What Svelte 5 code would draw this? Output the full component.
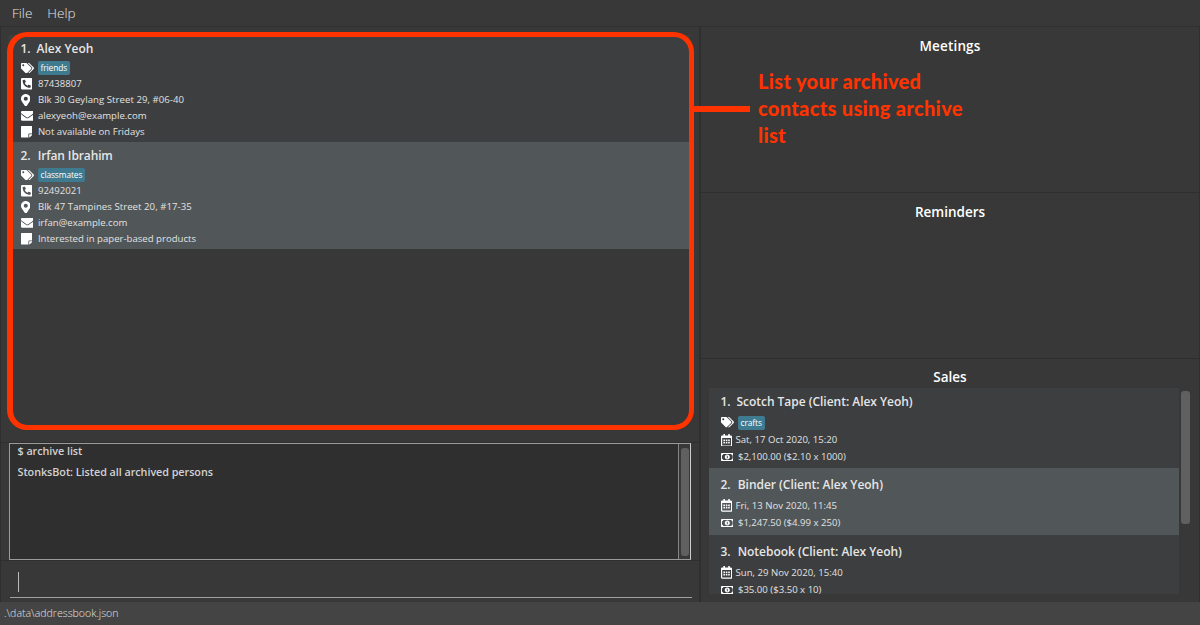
<script>
  const persons = [
    {
      name: 'Alex Yeoh', tag: 'friends', phone: '87438807',
      address: 'Blk 30 Geylang Street 29, #06-40',
      email: 'alexyeoh@example.com', remark: 'Not available on Fridays'
    },
    {
      name: 'Irfan Ibrahim', tag: 'classmates', phone: '92492021',
      address: 'Blk 47 Tampines Street 20, #17-35',
      email: 'irfan@example.com', remark: 'Interested in paper-based products'
    }
  ];
  const sales = [
    { item: 'Scotch Tape (Client: Alex Yeoh)', tag: 'crafts', date: 'Sat, 17 Oct 2020, 15:20', price: '$2,100.00 ($2.10 x 1000)' },
    { item: 'Binder (Client: Alex Yeoh)', date: 'Fri, 13 Nov 2020, 11:45', price: '$1,247.50 ($4.99 x 250)' },
    { item: 'Notebook (Client: Alex Yeoh)', date: 'Sun, 29 Nov 2020, 15:40', price: '$35.00 ($3.50 x 10)' }
  ];
  const icons = {
    tags: { box: '0 0 640 512', w: 13, h: 10.4, d: 'M497.941 225.941L286.059 14.059A48 48 0 0 0 252.118 0H48C21.49 0 0 21.49 0 48v204.118a48 48 0 0 0 14.059 33.941l211.882 211.882c18.744 18.745 49.136 18.746 67.882 0l204.118-204.118c18.745-18.745 18.745-49.137 0-67.882zM112 160c-26.51 0-48-21.49-48-48s21.49-48 48-48 48 21.49 48 48-21.49 48-48 48zm513.941 133.823L421.823 497.941c-18.745 18.745-49.137 18.745-67.882 0l-.36-.36L527.64 323.522c16.999-16.999 26.36-39.6 26.36-63.64s-9.362-46.641-26.36-63.64L331.397 0h48.721a48 48 0 0 1 33.941 14.059l211.882 211.882c18.745 18.745 18.745 49.137 0 67.882z' },
    phone: { box: '0 32 448 448', w: 11.5, h: 11.5, d: 'M400 32H48A48 48 0 0 0 0 80v352a48 48 0 0 0 48 48h352a48 48 0 0 0 48-48V80a48 48 0 0 0-48-48zm-16.39 307.37l-15 65A15 15 0 0 1 354 416C194 416 64 286.29 64 126a15.7 15.7 0 0 1 11.63-14.61l65-15A18.23 18.23 0 0 1 144 96a16.27 16.27 0 0 1 13.79 9.09l30 70A17.9 17.9 0 0 1 189 181a17 17 0 0 1-5.5 11.61l-37.89 31a231.91 231.91 0 0 0 110.78 110.78l31-37.89A17 17 0 0 1 299 291a17.85 17.85 0 0 1 5.91 1.21l70 30A16.25 16.25 0 0 1 384 336a17.41 17.41 0 0 1-.39 3.37z' },
    pin: { box: '0 0 384 512', w: 9.6, h: 12.8, d: 'M172.268 501.67C26.97 291.031 0 269.413 0 192 0 85.961 85.961 0 192 0s192 85.961 192 192c0 77.413-26.97 99.031-172.268 309.67-9.535 13.774-29.93 13.773-39.464 0zM192 272c44.183 0 80-35.817 80-80s-35.817-80-80-80-80 35.817-80 80 35.817 80 80 80z' },
    mail: { box: '0 64 512 384', w: 12.8, h: 9.8, d: 'M502.3 190.8c3.9-3.1 9.7-.2 9.7 4.7V400c0 26.5-21.5 48-48 48H48c-26.5 0-48-21.5-48-48V195.6c0-5 5.7-7.8 9.7-4.7 22.4 17.4 52.1 39.5 154.1 113.6 21.1 15.4 56.7 47.8 92.2 47.6 35.7.3 72-32.8 92.3-47.6 102-74.1 131.6-96.3 154-113.7zM256 320c23.2.4 56.6-29.2 73.4-41.4 132.7-96.3 142.8-104.7 173.4-128.7 5.8-4.5 9.2-11.5 9.2-18.9v-19c0-26.5-21.5-48-48-48H48c-26.5 0-48 21.5-48 48v19c0 7.4 3.4 14.3 9.2 18.9 30.6 23.9 40.7 32.4 173.4 128.7 16.8 12.2 50.2 41.8 73.4 41.4z' },
    note: { box: '0 32 448 448', w: 11.5, h: 11.5, d: 'M312 320h136V56c0-13.3-10.7-24-24-24H24C10.7 32 0 42.7 0 56v400c0 13.3 10.7 24 24 24h264V344c0-13.2 10.8-24 24-24zm129 55l-98 98c-4.5 4.5-10.6 7-17 7h-6V352h128v6.1c0 6.3-2.5 12.4-7 16.9z' },
    calendar: { box: '0 0 448 512', w: 11.2, h: 12.8, d: 'M96 224h64v64H96zM192 224h64v64h-64zM288 224h64v64h-64zM96 320h64v64H96zM192 320h64v64h-64zM288 320h64v64h-64zM448 112v352c0 26.5-21.5 48-48 48H48c-26.5 0-48-21.5-48-48V112c0-26.5 21.5-48 48-48h48V12c0-6.6 5.4-12 12-12h40c6.6 0 12 5.4 12 12v52h128V12c0-6.6 5.4-12 12-12h40c6.6 0 12 5.4 12 12v52h48c26.5 0 48 21.5 48 48zm-48 346V160H48v298c0 3.3 2.7 6 6 6h340c3.3 0 6-2.7 6-6z' },
    money: { box: '0 64 640 384', w: 12.6, h: 8, d: 'M608 64H32C14.3 64 0 78.3 0 96v320c0 17.7 14.3 32 32 32h576c17.7 0 32-14.3 32-32V96c0-17.7-14.3-32-32-32zM112 112H528c0 35 29 64 64 64v160c-35 0-64 29-64 64H112c0-35-29-64-64-64V176c35 0 64-29 64-64zM320 136c-71 0-128 54-128 120s57 120 128 120 128-54 128-120-57-120-128-120zM304 190h36v100h20v30h-80v-30h24v-64h-20v-26z' }
  };
</script>

{#snippet icon(key)}
  {@const i = icons[key]}
  <span class="icon"><svg viewBox={i.box} width={i.w} height={i.h} preserveAspectRatio="none" fill-rule="evenodd"><path d={i.d} /></svg></span>
{/snippet}

<div class="app">
  <nav><span>File</span><span>Help</span></nav>
  <main>
    <section class="left">
      <div class="people">
        {#each persons as p, n}
          <article class="person" class:even={n % 2 === 1}>
            <h3><span>{n + 1}.</span>{p.name}</h3>
            <div class="row">{@render icon('tags')}<b class="tag">{p.tag}</b></div>
            <div class="row">{@render icon('phone')}<span>{p.phone}</span></div>
            <div class="row address">{@render icon('pin')}<span>{p.address}</span></div>
            <div class="row">{@render icon('mail')}<span>{p.email}</span></div>
            <div class="row">{@render icon('note')}<span>{p.remark}</span></div>
          </article>
        {/each}
        <div class="frame"></div>
        <div class="lead"></div>
      </div>
      <div class="result">
        <div class="log"><p>$ archive list</p><p>StonksBot: Listed all archived persons</p></div>
        <div class="track"><i></i></div>
      </div>
      <div class="command"><div class="field"><i></i></div></div>
    </section>
    <section class="right">
      <div class="panel"><h2>Meetings</h2><p class="callout">List your archived<br />contacts using archive<br />list</p></div>
      <div class="panel"><h2>Reminders</h2></div>
      <div class="panel">
        <h2>Sales</h2>
        <div class="sales">
          <div class="list">
            {#each sales as s, n}
              <article class="sale" class:even={n % 2 === 1} class:tagged={s.tag}>
                <h3><span>{n + 1}.</span>{s.item}</h3>
                {#if s.tag}<div class="row">{@render icon('tags')}<b class="tag">{s.tag}</b></div>{/if}
                <div class="row date">{@render icon('calendar')}<span>{s.date}</span></div>
                <div class="row price">{@render icon('money')}<span>{s.price}</span></div>
              </article>
            {/each}
          </div>
          <i class="thumb"></i>
        </div>
      </div>
    </section>
  </main>
  <footer>.\data\addressbook.json</footer>
</div>

<style>
  :global(body) { margin: 0; background: #383838; }
  * { box-sizing: border-box; }
  .app { width: 1200px; height: 625px; display: flex; flex-direction: column; overflow: hidden; background: #383838; color: #e6e6e6; font-family: 'Open Sans', 'Noto Sans', sans-serif; }
  nav { height: 27px; flex: none; display: flex; gap: 15px; padding-left: 12px; border-bottom: 1px solid #303030; font-size: 13.5px; line-height: 26px; font-weight: 300; color: #e6e6e6; }
  main { height: 574.5px; flex: none; display: flex; border-left: 1px solid #2e2e2e; border-right: 1px solid #2e2e2e; }
  .left { width: 700px; flex: none; border-right: 2px solid #2f2f2f; display: flex; flex-direction: column; }
  .people { position: relative; height: 416px; padding: 8px 9px 0 8px; border-bottom: 1px solid #303030; }
  .person { height: 107px; padding: 6px 0 0 11.5px; background: #3c3e3f; }
  article.even { background: #515658; }
  h3 { margin: 0; height: 19px; line-height: 16px; font-size: 12px; font-weight: 600; display: flex; white-space: nowrap; }
  h3 span { width: 17.2px; flex: none; }
  article:first-child h3 span { width: 16px; }
  .person h3 { letter-spacing: -0.12px; }
  .person:first-child h3 { letter-spacing: 0; }
  .row { display: flex; align-items: center; height: 16px; font-size: 9.6px; line-height: 16px; color: #e2e2e2; white-space: nowrap; }
  .address { letter-spacing: 0.05px; }
  .icon { width: 17.4px; flex: none; display: flex; }
  svg { display: block; fill: #fff; }
  .tag { height: 14px; line-height: 13px; padding: 0 3px; margin-left: -0.4px; border-radius: 2px; background: #3e7b91; color: #fff; font-size: 8.4px; font-weight: 400; letter-spacing: -0.1px; }
  .frame { position: absolute; left: 6px; top: 5px; width: 687px; height: 398px; border: 5px solid #ff3300; border-left-width: 6px; border-radius: 20px; }
  .lead { position: absolute; left: 690px; top: 79px; width: 59px; height: 6px; background: #ff3300; z-index: 2; }
  .result { display: flex; height: 117px; margin: 0 8px 0 8px; border: 1px solid #9b9b9b; border-right-color: #ccc; background: #383838; }
  .log { flex: 1; background: #2f2f2f; border-right: 1px solid #858585; padding-left: 7.5px; font-size: 10.8px; letter-spacing: -0.05px; font-weight: 600; color: #d2d2d2; }
  .log p { margin: 0; height: 20.5px; line-height: 14px; }
  .track { width: 11px; padding: 4px 1px 3px 2px; }
  .track i, .thumb { display: block; background: #606060; border-radius: 3px; }
  .track i { width: 8px; height: 108px; }
  .command { flex: 1; border-top: 1px solid #2f2f2f; padding: 10.5px 7px 4px 9px; }
  .field { height: 26px; border-bottom: 1.5px solid #a0a0a0; padding-left: 8px; }
  .field i { display: block; width: 1px; height: 20px; background: #bbb; }
  .right { flex: 1; display: flex; flex-direction: column; }
  .panel { position: relative; height: 166px; flex: none; border-bottom: 1px solid #2e2e2e; }
  .panel:last-child { height: 242px; border: 0; }
  h2 { margin: 0; height: 29px; line-height: 38px; font-size: 13.5px; font-weight: 600; color: #fff; text-align: center; }
  .panel:first-child h2 { letter-spacing: 0.15px; }
  .panel:last-child h2 { line-height: 37px; }
  .callout { position: absolute; left: 57px; top: 41px; margin: 0; color: #ff3300; font: 900 20px/27px Lato, 'Open Sans', sans-serif; letter-spacing: 0.32px; white-space: nowrap; }
  .sales { display: flex; height: 206px; margin: 0 0 0 8px; }
  .list { width: 470px; height: 206px; overflow: hidden; }
  .sale { height: 67px; padding: 8px 0 0 11.5px; background: #3c3e3f; }
  .sale.tagged { height: 80px; padding-top: 6px; }
  .sale h3 { height: 20.8px; line-height: 17px; letter-spacing: -0.03px; }
  .sale.tagged h3 { height: 20px; line-height: 16px; }
  .sale .row { height: 17.4px; line-height: 10px; }
  .sale .tag { line-height: 13px; }
  .sale.tagged .row:nth-child(2) { height: 17px; }
  .sale .date { height: 17.8px; }
  .sale .price { height: 16.8px; line-height: 8px; }
  .date .icon { width: 15px; }
  .thumb { width: 9px; height: 133px; margin: 3px 0 0 2px; }
  footer { flex: 1; padding-left: 4px; background: #444; font-size: 10.55px; line-height: 23px; font-weight: 300; color: #e0e0e0; }
</style>
